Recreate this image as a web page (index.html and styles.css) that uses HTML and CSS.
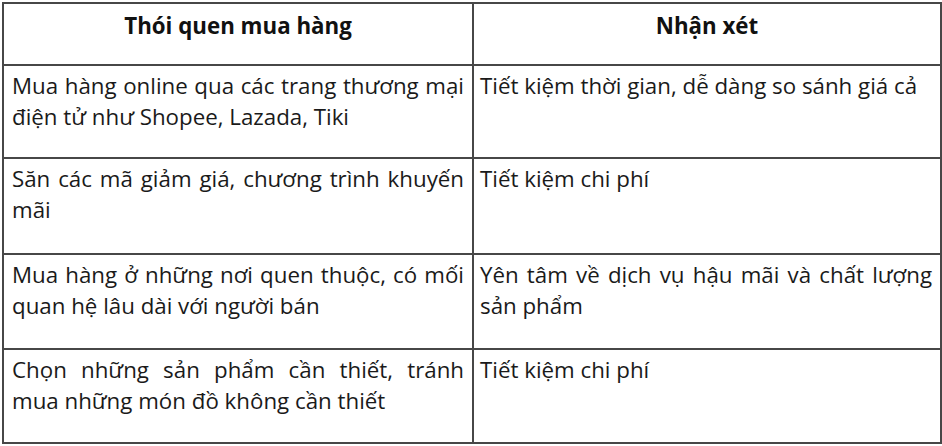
FILE: index.html
```html
<!DOCTYPE html>
<html lang="vi">
<head>
<meta charset="utf-8">
<link rel="stylesheet" href="styles.css">
</head>
<body>
<table class="habits">
  <colgroup>
    <col class="col-a">
    <col class="col-b">
  </colgroup>
  <thead>
    <tr class="row-head">
      <th>Thói quen mua hàng</th>
      <th>Nhận xét</th>
    </tr>
  </thead>
  <tbody>
    <tr class="row-1">
      <td>Mua hàng online qua các trang thương mại điện tử như Shopee, Lazada, Tiki</td>
      <td>Tiết kiệm thời gian, dễ dàng so sánh giá cả</td>
    </tr>
    <tr class="row-2">
      <td>Săn các mã giảm giá, chương trình khuyến mãi</td>
      <td>Tiết kiệm chi phí</td>
    </tr>
    <tr class="row-3">
      <td>Mua hàng ở những nơi quen thuộc, có mối quan hệ lâu dài với người bán</td>
      <td>Yên tâm về dịch vụ hậu mãi và chất lượng sản phẩm</td>
    </tr>
    <tr class="row-4">
      <td>Chọn những sản phẩm cần thiết, tránh mua những món đồ không cần thiết</td>
      <td>Tiết kiệm chi phí</td>
    </tr>
  </tbody>
</table>
</body>
</html>
```
FILE: styles.css
```css
html, body {
  margin: 0;
  padding: 0;
  background: #ffffff;
}
body {
  padding: 2px 0 0 2px;
  font-family: "Open Sans", "Noto Sans", sans-serif;
  color: #1a1a1a;
}
.habits {
  border-collapse: collapse;
  width: 938px;
  table-layout: fixed;
}
.col-a { width: 470px; }
.col-b { width: 468px; }
.habits th,
.habits td {
  border: 2px solid #474747;
  vertical-align: top;
  font-size: 22.3px;
  line-height: 31px;
}
.habits th {
  font-weight: 700;
  text-align: center;
  padding: 6px 8px 0 8px;
  color: #111;
}
.habits td {
  font-weight: 400;
  text-align: justify;
  padding: 4px 8px 0 8px;
}
.habits td + td {
  padding-left: 6px;
}
.row-head { height: 62px; }
.row-1 { height: 93px; }
.row-2 { height: 96px; }
.row-3 { height: 95px; }
.row-4 { height: 94px; }
```
